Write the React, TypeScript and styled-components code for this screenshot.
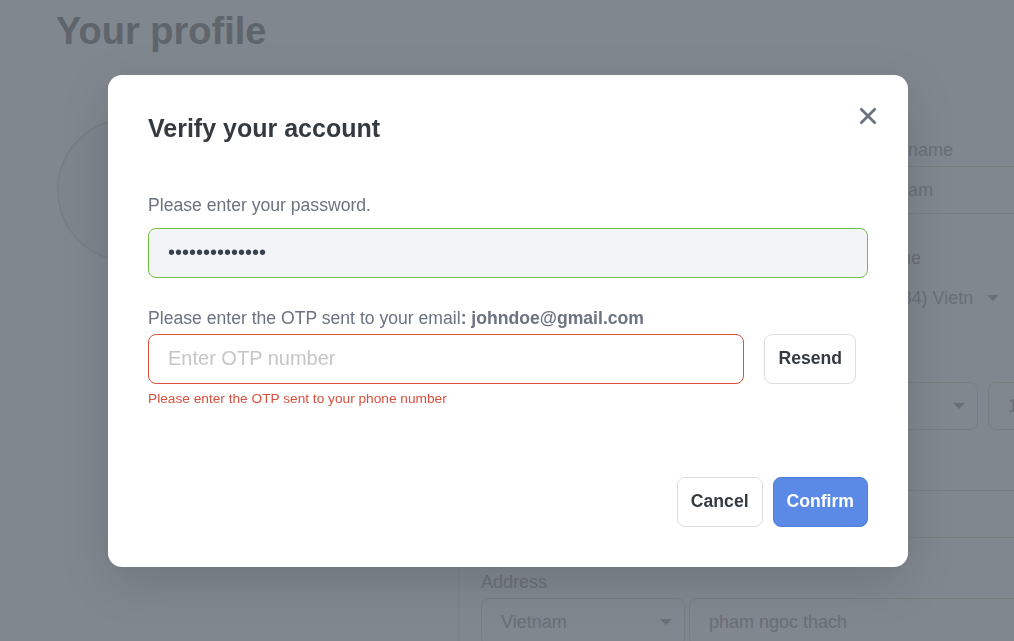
import React, { useState } from 'react'
import styled, { createGlobalStyle } from 'styled-components'

const GlobalStyle = createGlobalStyle`
  * {
    box-sizing: border-box;
  }
  body {
    margin: 0;
    font-family: "Liberation Sans", Arial, sans-serif;
    overflow: hidden;
    background: #fff;
  }
`

/* ---------- page behind the dialog ---------- */

const Page = styled.div`
  width: 1014px;
  height: 641px;
  overflow: hidden;
  padding: 9px 0 0 56px;
  background: #fff;
`

const PageTitle = styled.h1`
  margin: 0;
  font-size: 38px;
  line-height: 44px;
  font-weight: 700;
  color: #b5b3b2;
`

const ProfileGrid = styled.div`
  display: grid;
  grid-template-columns: 402px 800px;
  margin-top: 65px;
`

const AvatarColumn = styled.div``

const Avatar = styled.div`
  width: 144px;
  height: 144px;
  margin-left: 1px;
  border-radius: 50%;
  border: 2px solid #ececec;
  background: #fbfbfb;
`

const FormColumn = styled.div`
  border-left: 1px solid #f3f3f3;
  padding: 22px 0 0 22px;
  display: flex;
  flex-direction: column;
  gap: 34px;
`

const FormRow = styled.div`
  display: grid;
  grid-template-columns: 378px 378px;
  column-gap: 10px;
`

const FullRow = styled.div`
  display: flex;
  flex-direction: column;
`

const Field = styled.div`
  display: flex;
  flex-direction: column;
`

const FieldLabel = styled.label`
  font-size: 18px;
  line-height: 21px;
  color: #cccaca;
  margin-bottom: 5px;
`

const TextBox = styled.div<{ $inset?: number }>`
  height: 48px;
  border: 1px solid #e4f0dc;
  border-radius: 8px;
  padding: 0 ${p => p.$inset ?? 19}px;
  display: flex;
  align-items: center;
  font-size: 18px;
  color: #cccaca;
  white-space: nowrap;
  overflow: hidden;
`

const Inline = styled.div<{ $gap: number }>`
  display: flex;
  gap: ${p => p.$gap}px;
`

const SelectBox = styled.div<{ $width: number; $bordered?: boolean }>`
  width: ${p => p.$width}px;
  flex-shrink: 0;
  height: 48px;
  border: 1px solid ${p => (p.$bordered ? '#e4f0dc' : 'transparent')};
  border-radius: 8px;
  padding: 0 ${p => (p.$bordered ? 12 : 14)}px 0 ${p => (p.$bordered ? 19 : 15)}px;
  display: flex;
  align-items: center;
  justify-content: space-between;
  font-size: 18px;
  color: #cccaca;
  white-space: nowrap;
`

const SelectText = styled.span`
  overflow: hidden;
  flex: 1;
`

const Caret = styled.span<{ $space?: number }>`
  width: 0;
  height: 0;
  margin-left: ${p => p.$space ?? 8}px;
  border-left: 6px solid transparent;
  border-right: 6px solid transparent;
  border-top: 6px solid #cccaca;
`

/* ---------- dialog ---------- */

const Overlay = styled.div`
  position: fixed;
  inset: 0;
  padding-left: 2px;
  background: rgba(24, 36, 50, 0.55);
  display: flex;
  align-items: center;
  justify-content: center;
`

const Modal = styled.div`
  position: relative;
  width: 800px;
  padding: 40px;
  background: #fff;
  border-radius: 14px;
  box-shadow: 0 14px 50px rgba(0, 0, 0, 0.14);
  display: flex;
  flex-direction: column;
`

const ModalTitle = styled.h2`
  margin: -2px 0 0;
  font-size: 25px;
  line-height: 30px;
  font-weight: 700;
  color: #343a40;
`

const CloseButton = styled.button`
  position: absolute;
  top: 31px;
  right: 30px;
  width: 21px;
  height: 21px;
  padding: 0;
  border: none;
  background: none;
  cursor: pointer;
  display: flex;
  align-items: center;
  justify-content: center;
`

const Section = styled.div<{ $top: number }>`
  margin-top: ${p => p.$top}px;
  display: flex;
  flex-direction: column;
`

const Prompt = styled.p<{ $gap: number }>`
  margin: 0 0 ${p => p.$gap}px;
  font-size: 17.6px;
  line-height: 21px;
  color: #6b7280;

  strong {
    font-weight: 700;
  }
`

const Input = styled.input<{ $state: 'valid' | 'error' }>`
  height: 50px;
  width: 100%;
  padding: 0 19px;
  border-radius: 8px;
  border: 1px solid ${p => (p.$state === 'valid' ? '#75c040' : '#d9503f')};
  background: ${p => (p.$state === 'valid' ? '#f3f4f6' : '#fff')};
  font-family: "Liberation Sans", Arial, sans-serif;
  font-size: 20px;
  color: #374151;
  outline: none;

  &::placeholder {
    color: #c6c6c6;
  }
`

const OtpRow = styled.div`
  display: flex;
  gap: 20px;
  padding-right: 12px;
`

const ErrorText = styled.span`
  margin-top: 7px;
  font-size: 13.7px;
  line-height: 16px;
  color: #d9503f;
`

const Footer = styled.div`
  margin-top: 70px;
  display: flex;
  justify-content: flex-end;
  gap: 10px;
`

const Button = styled.button<{ $primary?: boolean }>`
  height: 50px;
  padding: 0 13px;
  flex-shrink: 0;
  border-radius: 8px;
  border: 1px solid ${p => (p.$primary ? '#4f7ed8' : '#dedede')};
  background: ${p => (p.$primary ? '#5b8ae6' : '#fff')};
  color: ${p => (p.$primary ? '#fff' : '#343a40')};
  font-family: "Liberation Sans", Arial, sans-serif;
  font-size: 17.6px;
  font-weight: 700;
  cursor: pointer;
`

const CloseIcon = () => (
  <svg width="18" height="18" viewBox="0 0 18 18">
    <path d="M2.5 2.5 L15.5 15.5 M15.5 2.5 L2.5 15.5" stroke="#6b7280" strokeWidth="2.8" strokeLinecap="square" />
  </svg>
)

const ProfileBackground: React.FC = () => (
  <Page>
    <PageTitle>Your profile</PageTitle>
    <ProfileGrid>
      <AvatarColumn>
        <Avatar />
      </AvatarColumn>
      <FormColumn>
        <FormRow>
          <Field>
            <FieldLabel>First name</FieldLabel>
            <TextBox>Thach</TextBox>
          </Field>
          <Field>
            <FieldLabel>Last name</FieldLabel>
            <TextBox $inset={16}>Pham</TextBox>
          </Field>
        </FormRow>
        <FormRow>
          <Field>
            <FieldLabel>Email</FieldLabel>
            <TextBox>johndoe@gmail.com</TextBox>
          </Field>
          <Field>
            <FieldLabel>Phone</FieldLabel>
            <Inline $gap={4}>
              <SelectBox $width={145}>
                <SelectText>(+84) Vietnam</SelectText>
                <Caret $space={13} />
              </SelectBox>
              <TextBox style={{ flex: 1 }}>0901234567</TextBox>
            </Inline>
          </Field>
        </FormRow>
        <FullRow>
          <FieldLabel>Date of birth</FieldLabel>
          <Inline $gap={10}>
            <SelectBox $width={378} $bordered>
              <SelectText>12</SelectText>
              <Caret />
            </SelectBox>
            <SelectBox $width={109} $bordered>
              <SelectText>05</SelectText>
              <Caret />
            </SelectBox>
            <SelectBox $width={258} $bordered>
              <SelectText>1995</SelectText>
              <Caret />
            </SelectBox>
          </Inline>
        </FullRow>
        <FullRow>
          <FieldLabel>Company</FieldLabel>
          <TextBox style={{ width: 766 }}>Resketch Ltd.</TextBox>
        </FullRow>
        <FullRow>
          <FieldLabel>Address</FieldLabel>
          <Inline $gap={4}>
            <SelectBox $width={204} $bordered>
              <SelectText>Vietnam</SelectText>
              <Caret />
            </SelectBox>
            <TextBox style={{ width: 558 }}>pham ngoc thach</TextBox>
          </Inline>
        </FullRow>
      </FormColumn>
    </ProfileGrid>
  </Page>
)

const App: React.FC = () => {
  const [password, setPassword] = useState('secretpassw0rd')
  const [otp, setOtp] = useState('')

  return (
    <>
      <GlobalStyle />
      <ProfileBackground />
      <Overlay>
        <Modal>
          <ModalTitle>Verify your account</ModalTitle>
          <CloseButton aria-label="Close">
            <CloseIcon />
          </CloseButton>

          <Section $top={52}>
            <Prompt $gap={12}>Please enter your password.</Prompt>
            <Input
              type="password"
              $state="valid"
              value={password}
              onChange={e => setPassword(e.target.value)}
            />
          </Section>

          <Section $top={30}>
            <Prompt $gap={5}>
              Please enter the OTP sent to your email<strong>: johndoe@gmail.com</strong>
            </Prompt>
            <OtpRow>
              <Input
                type="text"
                $state="error"
                placeholder="Enter OTP number"
                value={otp}
                onChange={e => setOtp(e.target.value)}
              />
              <Button>Resend</Button>
            </OtpRow>
            <ErrorText>Please enter the OTP sent to your phone number</ErrorText>
          </Section>

          <Footer>
            <Button>Cancel</Button>
            <Button $primary>Confirm</Button>
          </Footer>
        </Modal>
      </Overlay>
    </>
  )
}

export default App
